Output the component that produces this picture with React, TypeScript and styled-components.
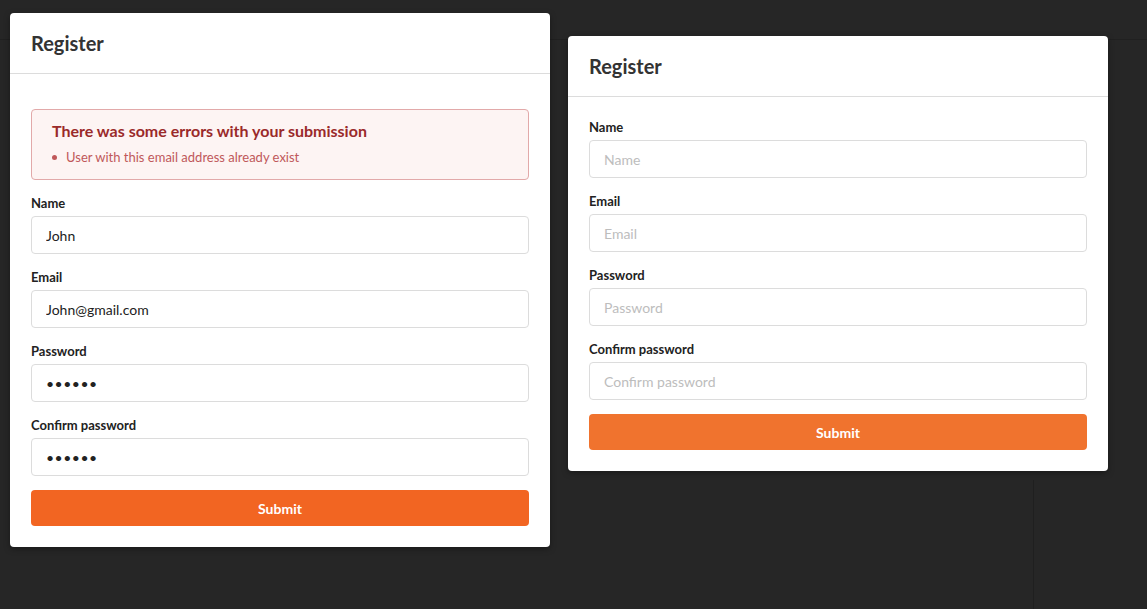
import React from "react";
import styled, { createGlobalStyle } from "styled-components";

const Global = createGlobalStyle`
  html, body { margin: 0; padding: 0; }
  body {
    background: #262626;
    font-family: Lato, "Open Sans", Arial, sans-serif;
    width: 1147px;
    height: 609px;
    overflow: hidden;
  }
  * { box-sizing: border-box; }
`;

const Page = styled.div`
  position: relative;
  display: flex;
  align-items: flex-start;
  gap: 18px;
  padding: 13px 10px;
  height: 609px;
`;

const BackLineH = styled.div`
  position: absolute;
  left: 0;
  right: 0;
  top: 39px;
  height: 1px;
  background: #202020;
`;

const BackLineV = styled.div`
  position: absolute;
  left: 1033px;
  top: 480px;
  bottom: 0;
  width: 1px;
  background: #1f1f1f;
`;

const Card = styled.div<{ $offset?: number }>`
  position: relative;
  z-index: 1;
  width: 540px;
  margin-top: ${(p) => p.$offset ?? 0}px;
  background: #fff;
  border-radius: 4px;
  box-shadow: 0 2px 6px rgba(0, 0, 0, 0.35);
`;

const Header = styled.div`
  height: 61px;
  display: flex;
  align-items: center;
  padding: 0 21px;
  border-bottom: 1px solid #dcdcdc;
  font-size: 20px;
  font-weight: 700;
  color: #333;
`;

const Body = styled.form`
  display: flex;
  flex-direction: column;
  padding: 22px 21px 21px;
`;

const Alert = styled.div`
  margin-top: 13px;
  margin-bottom: 15px;
  padding: 11px 20px 0;
  height: 71px;
  background: #fdf4f3;
  border: 1px solid #e2a9a9;
  border-radius: 4px;
`;

const AlertTitle = styled.div`
  font-size: 16px;
  font-weight: 700;
  color: #9a2a2a;
  line-height: 20px;
`;

const AlertList = styled.ul`
  margin: 8px 0 0;
  padding: 0;
  list-style: none;
`;

const AlertItem = styled.li`
  position: relative;
  padding-left: 14px;
  font-size: 13px;
  line-height: 16px;
  color: #c0585a;
  &::before {
    content: "";
    position: absolute;
    left: 0;
    top: 6px;
    width: 5px;
    height: 5px;
    border-radius: 50%;
    background: #c0585a;
  }
`;

const Field = styled.div`
  display: flex;
  flex-direction: column;
  margin-bottom: 15px;
`;

const Label = styled.label`
  font-size: 13px;
  font-weight: 700;
  line-height: 16px;
  color: #222;
  margin-bottom: 5px;
`;

const Input = styled.input<{ $masked?: boolean }>`
  height: 38px;
  width: 100%;
  border: 1px solid #dcdcdc;
  border-radius: 4px;
  padding: 0 14px;
  font-family: Lato, "Open Sans", Arial, sans-serif;
  font-size: 14px;
  letter-spacing: ${(p) => (p.$masked ? "0.5px" : "0")};
  color: #222;
  background: #fff;
  outline: none;
  &::placeholder {
    color: #bdbdbd;
    letter-spacing: 0;
  }
`;

const Button = styled.button<{ $tone?: string }>`
  margin-top: -1px;
  height: 36px;
  width: 100%;
  border: none;
  border-radius: 4px;
  background: ${(p) => p.$tone ?? "#f26522"};
  color: #fff;
  font-family: Lato, "Open Sans", Arial, sans-serif;
  font-size: 14px;
  font-weight: 700;
  cursor: pointer;
`;

type FieldDef = { label: string; type: string; value?: string };

const fields: FieldDef[] = [
  { label: "Name", type: "text", value: "John" },
  { label: "Email", type: "email", value: "John@gmail.com" },
  { label: "Password", type: "password", value: "123456" },
  { label: "Confirm password", type: "password", value: "123456" },
];

function RegisterCard({
  filled,
  offset,
  tone,
}: {
  filled: boolean;
  offset?: number;
  tone?: string;
}) {
  return (
    <Card $offset={offset}>
      <Header>Register</Header>
      <Body onSubmit={(e) => e.preventDefault()}>
        {filled && (
          <Alert>
            <AlertTitle>There was some errors with your submission</AlertTitle>
            <AlertList>
              <AlertItem>User with this email address already exist</AlertItem>
            </AlertList>
          </Alert>
        )}
        {fields.map((f) => (
          <Field key={f.label}>
            <Label>{f.label}</Label>
            <Input
              type={f.type}
              placeholder={f.label}
              defaultValue={filled ? f.value : ""}
              $masked={filled && f.type === "password"}
            />
          </Field>
        ))}
        <Button type="submit" $tone={tone}>
          Submit
        </Button>
      </Body>
    </Card>
  );
}

export default function App() {
  return (
    <>
      <Global />
      <Page>
        <BackLineH />
        <BackLineV />
        <RegisterCard filled />
        <RegisterCard filled={false} offset={23} tone="#f0732e" />
      </Page>
    </>
  );
}
